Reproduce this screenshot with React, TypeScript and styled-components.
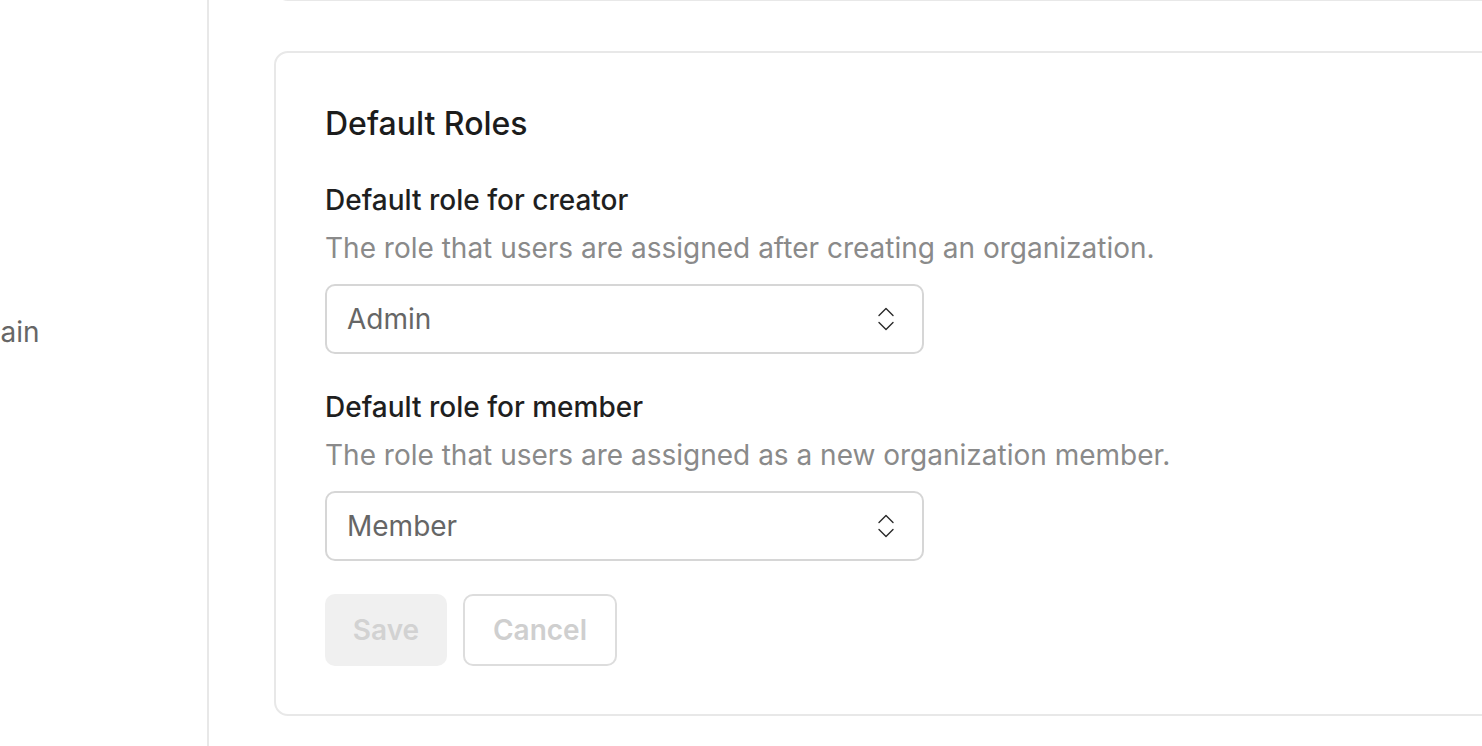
import styled, { createGlobalStyle } from 'styled-components';

const GlobalStyle = createGlobalStyle`
  html, body {
    margin: 0;
    padding: 0;
    background: #ffffff;
    overflow: hidden;
  }
  body {
    font-family: Inter, "Noto Sans", "Liberation Sans", sans-serif;
    -webkit-font-smoothing: antialiased;
  }
`;

const fields = [
  {
    label: 'Default role for creator',
    description: 'The role that users are assigned after creating an organization.',
    value: 'Admin',
  },
  {
    label: 'Default role for member',
    description: 'The role that users are assigned as a new organization member.',
    value: 'Member',
  },
];

// up/down chevrons shown at the right of each select
const UpDownIcon = () => (
  <svg width="16" height="24" viewBox="0 0 16 24" fill="none" stroke="#2a2a2a" strokeWidth="1.4" strokeLinecap="round" strokeLinejoin="round">
    <path d="M1 8.5 8 1.5l7 7" />
    <path d="M1 15.5 8 22.5l7-7" />
  </svg>
);

const App = () => {
  return (
    <Page>
      <GlobalStyle />
      <Sidebar>
        <NavItem>Domain</NavItem>
      </Sidebar>
      <Main>
        <PrevCard />
        <Card>
          <Heading>Default Roles</Heading>
          <Fields>
            {fields.map((field) => (
              <Field key={field.label}>
                <Label>{field.label}</Label>
                <Description>{field.description}</Description>
                <Select>
                  <SelectValue>{field.value}</SelectValue>
                  <UpDownIcon />
                </Select>
              </Field>
            ))}
          </Fields>
          <Actions>
            <SaveButton disabled>Save</SaveButton>
            <CancelButton disabled>Cancel</CancelButton>
          </Actions>
        </Card>
      </Main>
    </Page>
  );
};

export default App;

const Page = styled.div`
  display: flex;
  width: 1482px;
  height: 746px;
  overflow: hidden;
`;

const Sidebar = styled.aside`
  width: 207px;
  flex-shrink: 0;
  border-right: 2px solid #e8e8e8;
  display: flex;
  flex-direction: column;
  padding-top: 312px;
  overflow: hidden;
`;

const NavItem = styled.div`
  margin-left: -61px;
  font-size: 28px;
  line-height: 40px;
  color: #666666;
  white-space: nowrap;
`;

const Main = styled.main`
  flex: 1;
  display: flex;
  flex-direction: column;
  gap: 50px;
  padding-left: 65px;
  overflow: hidden;
`;

const PrevCard = styled.div`
  width: 1300px;
  height: 60px;
  margin-top: -59px;
  flex-shrink: 0;
  border: 2px solid #e8e8e8;
  border-radius: 14px;
  box-sizing: border-box;
`;

const Card = styled.section`
  width: 1300px;
  flex-shrink: 0;
  box-sizing: border-box;
  border: 2px solid #e8e8e8;
  border-radius: 14px;
  padding: 47px 49px 48px;
  display: flex;
  flex-direction: column;
`;

const Heading = styled.h2`
  margin: 0;
  font-size: 32px;
  line-height: 48px;
  font-weight: 500;
  color: #1c1c1c;
`;

const Fields = styled.div`
  margin-top: 32px;
  display: flex;
  flex-direction: column;
  gap: 33px;
`;

const Field = styled.div`
  display: flex;
  flex-direction: column;
`;

const Label = styled.div`
  font-size: 28px;
  line-height: 40px;
  font-weight: 500;
  color: #1f1f1f;
`;

const Description = styled.div`
  margin-top: 8px;
  font-size: 28px;
  line-height: 40px;
  color: #8a8a8a;
`;

const Select = styled.div`
  margin-top: 16px;
  width: 599px;
  height: 70px;
  box-sizing: border-box;
  border: 2px solid #d6d6d6;
  border-radius: 10px;
  padding: 0 28px 0 20px;
  display: flex;
  align-items: center;
  justify-content: space-between;
`;

const SelectValue = styled.span`
  font-size: 28px;
  color: #666666;
`;

const Actions = styled.div`
  margin-top: 33px;
  display: flex;
  gap: 16px;
`;

const BaseButton = styled.button`
  height: 72px;
  box-sizing: border-box;
  border-radius: 10px;
  font-family: inherit;
  font-size: 28px;
  font-weight: 600;
  padding: 0;
  cursor: not-allowed;
`;

const SaveButton = styled(BaseButton)`
  background: #f0f0f0;
  border: none;
  color: #d2d2d2;
  width: 122px;
`;

const CancelButton = styled(BaseButton)`
  background: #ffffff;
  border: 2px solid #dddddd;
  color: #cfcfcf;
  width: 154px;
`;
